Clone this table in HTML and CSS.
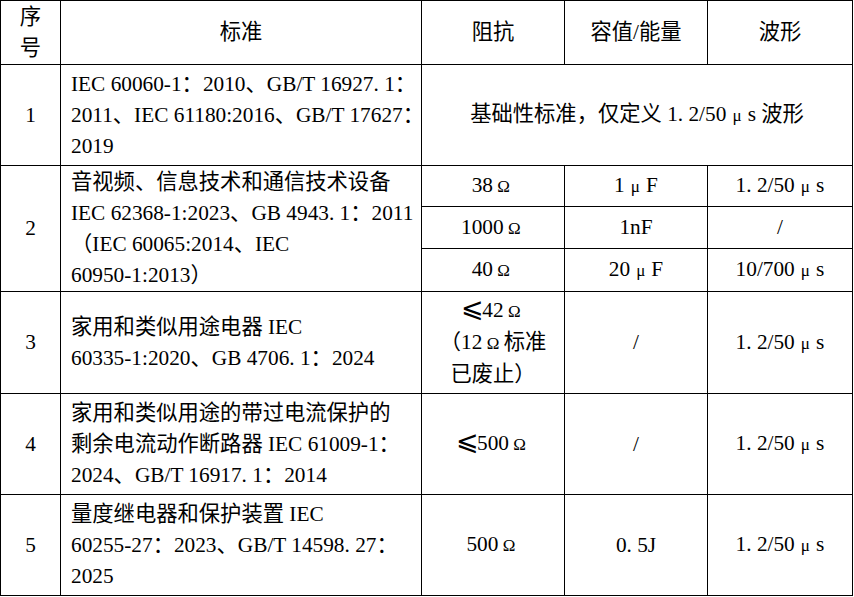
FILE: index.html
```html
<!DOCTYPE html>
<html lang="zh-CN">
<head>
<meta charset="utf-8">
<title>标准对照表</title>
<link rel="stylesheet" href="styles.css">
</head>
<body>
<table class="grid">
  <colgroup>
    <col class="c-no">
    <col class="c-std">
    <col class="c-imp">
    <col class="c-cap">
    <col class="c-wave">
  </colgroup>
  <tr class="r-head">
    <td class="ctr">序<br>号</td>
    <td class="ctr">标准</td>
    <td class="ctr">阻抗</td>
    <td class="ctr">容值/能量</td>
    <td class="ctr">波形</td>
  </tr>
  <tr class="r-big">
    <td class="ctr">1</td>
    <td class="std">IEC 60060-1：2010、GB/T 16927<span class="h">.</span>1：<br>2011、IEC 61180:2016、GB/T 17627：<br>2019</td>
    <td class="ctr" colspan="3">基础性标准，仅定义 1<span class="h">.</span>2/50<span class="u">μ</span>s 波形</td>
  </tr>
  <tr class="r-s1">
    <td class="ctr" rowspan="3">2</td>
    <td class="std" rowspan="3">音视频、信息技术和通信技术设备<br>IEC 62368-1:2023、GB 4943<span class="h">.</span>1：2011<br>（IEC 60065:2014、IEC<br>60950-1:2013）</td>
    <td class="ctr">38<span class="u">Ω</span></td>
    <td class="ctr">1<span class="u">μ</span>F</td>
    <td class="ctr">1<span class="h">.</span>2/50<span class="u">μ</span>s</td>
  </tr>
  <tr class="r-s2">
    <td class="ctr">1000<span class="u">Ω</span></td>
    <td class="ctr">1nF</td>
    <td class="ctr">/</td>
  </tr>
  <tr class="r-s3">
    <td class="ctr">40<span class="u">Ω</span></td>
    <td class="ctr">20<span class="u">μ</span>F</td>
    <td class="ctr">10/700<span class="u">μ</span>s</td>
  </tr>
  <tr class="r-big3">
    <td class="ctr">3</td>
    <td class="std">家用和类似用途电器 IEC<br>60335-1:2020、GB 4706<span class="h">.</span>1：2024</td>
    <td class="ctr"><span class="le">⩽</span>42<span class="u">Ω</span><br>（12<span class="u">Ω</span>标准<br>已废止）</td>
    <td class="ctr">/</td>
    <td class="ctr">1<span class="h">.</span>2/50<span class="u">μ</span>s</td>
  </tr>
  <tr class="r-big">
    <td class="ctr">4</td>
    <td class="std">家用和类似用途的带过电流保护的<br>剩余电流动作断路器 IEC 61009-1：<br>2024、GB/T 16917<span class="h">.</span>1：2014</td>
    <td class="ctr"><span class="le">⩽</span>500<span class="u">Ω</span></td>
    <td class="ctr">/</td>
    <td class="ctr">1<span class="h">.</span>2/50<span class="u">μ</span>s</td>
  </tr>
  <tr class="r-big">
    <td class="ctr">5</td>
    <td class="std">量度继电器和保护装置 IEC<br>60255-27：2023、GB/T 14598<span class="h">.</span>27：<br>2025</td>
    <td class="ctr">500<span class="u">Ω</span></td>
    <td class="ctr">0<span class="h">.</span>5J</td>
    <td class="ctr">1<span class="h">.</span>2/50<span class="u">μ</span>s</td>
  </tr>
</table>
</body>
</html>
```

FILE: styles.css
```css
html, body {
  margin: 0;
  padding: 0;
  background: #ffffff;
}

body {
  font-family: "Liberation Serif", "Noto Sans CJK SC", serif;
  font-size: 21.3px;
  line-height: 31px;
  color: #000000;
}

.grid {
  border-collapse: collapse;
  table-layout: fixed;
  width: 853px;
}

.grid td {
  border: 1px solid #000000;
  padding: 0;
  white-space: nowrap;
  vertical-align: middle;
}

.c-no { width: 60px; }
.c-std { width: 361px; }
.c-imp { width: 143px; }
.c-cap { width: 143px; }
.c-wave { width: 145px; }

.r-head { height: 64px; }
.r-big { height: 101px; }
.r-big3 { height: 102px; }
.r-s1 { height: 41px; }
.r-s2 { height: 42px; }
.r-s3 { height: 43px; }

.ctr {
  text-align: center;
}

.std {
  text-align: left;
  padding-left: 10px !important;
}

.h {
  display: inline-block;
  width: 0.5em;
  text-align: left;
}

.u {
  display: inline-block;
  width: 1.25em;
  font-size: 0.8em;
  text-align: center;
}

.le {
  display: inline-block;
  width: 0.8em;
  text-align: center;
  font-family: "DejaVu Sans", "Noto Sans CJK SC", sans-serif;
  font-size: 1.25em;
  line-height: 1;
  font-weight: 300;
}
```
